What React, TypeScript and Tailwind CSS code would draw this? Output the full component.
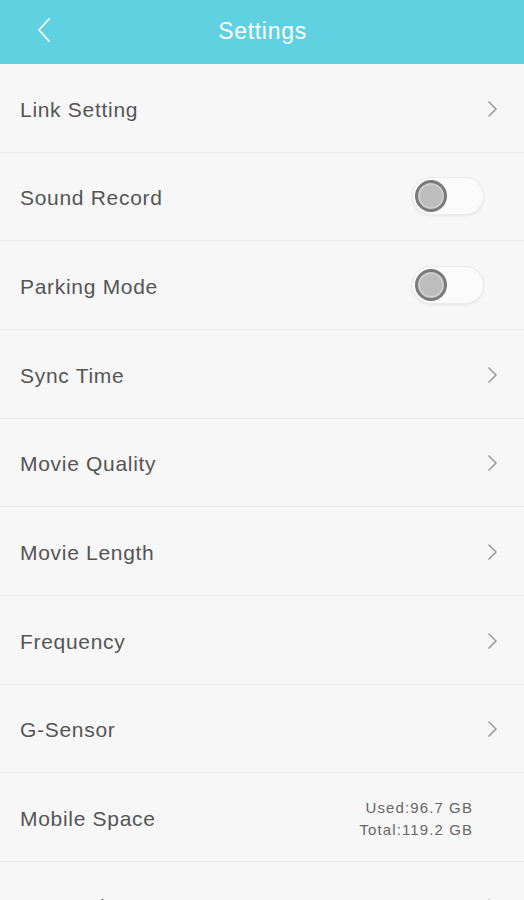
type Row = { label: string; kind: "link" | "toggle" | "space" };

const rows: Row[] = [
  { label: "Link Setting", kind: "link" },
  { label: "Sound Record", kind: "toggle" },
  { label: "Parking Mode", kind: "toggle" },
  { label: "Sync Time", kind: "link" },
  { label: "Movie Quality", kind: "link" },
  { label: "Movie Length", kind: "link" },
  { label: "Frequency", kind: "link" },
  { label: "G-Sensor", kind: "link" },
  { label: "Mobile Space", kind: "space" },
  { label: "SD Card", kind: "link" },
];

function Chevron() {
  return (
    <svg width="12" height="18" viewBox="0 0 12 18" fill="none" className="mr-[25px] mt-[2px]">
      <path d="M2 2l7 7-7 7" stroke="#9a9a9a" strokeWidth="1.6" strokeLinecap="round" strokeLinejoin="round" />
    </svg>
  );
}

function Toggle() {
  return (
    <div className="mr-[40px] w-[72px] h-[38px] rounded-full bg-[#fbfbfb] border border-[#ececec] shadow-[0_1px_3px_rgba(0,0,0,0.08)] flex items-center pl-[2px]">
      <div className="w-[32px] h-[32px] rounded-full border-[3px] border-[#7a7a7a] bg-[#bdbdbd] shadow-[inset_0_0_0_2px_#cfcfcf]" />
    </div>
  );
}

export default function App() {
  return (
    <div className="w-[524px] h-[900px] overflow-hidden bg-[#f7f7f7]" style={{ fontFamily: '"Liberation Sans", Arial, sans-serif' }}>
      <div className="h-[64px] bg-[#5fd1e1] flex items-center relative">
        <svg width="16" height="26" viewBox="0 0 16 26" fill="none" className="absolute left-[36px] top-[17px]">
          <path d="M13 2L3 13l10 11" stroke="#ffffff" strokeWidth="1.8" strokeLinecap="round" strokeLinejoin="round" />
        </svg>
        <div className="flex-1 text-center text-white text-[23px] tracking-[0.7px] ml-[1px] pb-[2px]">Settings</div>
      </div>
      {rows.map((r) => (
        <div key={r.label} className="h-[88.67px] flex items-center justify-between border-b border-[#ececec] pl-[20px]">
          <span className="text-[21px] tracking-[0.7px] text-[#555555] pt-[3px]">{r.label}</span>
          {r.kind === "link" && <Chevron />}
          {r.kind === "toggle" && <Toggle />}
          {r.kind === "space" && (
            <div className="mr-[51px] pt-[4px] text-right text-[15px] tracking-[1.1px] leading-[22px] text-[#666666]">
              <div>Used:96.7 GB</div>
              <div>Total:119.2 GB</div>
            </div>
          )}
        </div>
      ))}
    </div>
  );
}
